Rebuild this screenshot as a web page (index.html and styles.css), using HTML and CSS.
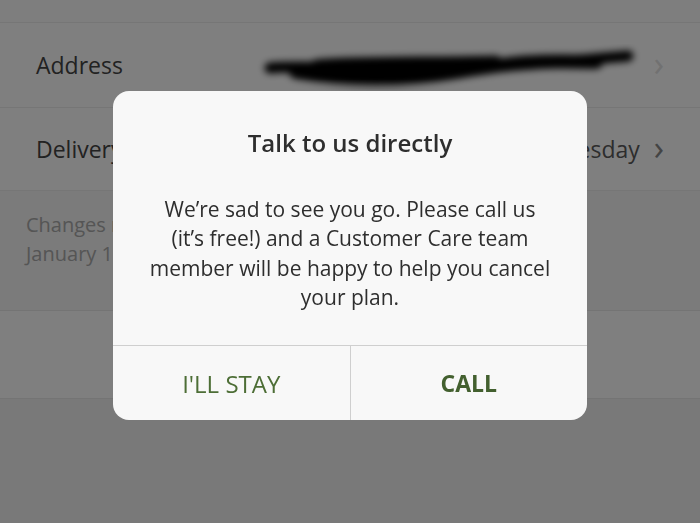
FILE: index.html
```html
<!DOCTYPE html>
<html lang="en">
<head>
    <meta charset="UTF-8">
    <meta name="viewport" content="width=device-width, initial-scale=1.0">
    <title>Subscription settings</title>
    <link rel="stylesheet" href="styles.css">
</head>
<body>
    <div class="page">
        <div class="top-band"></div>

        <div class="setting-row">
            <span class="setting-label">Address</span>
            <!-- address scribbled out -->
            <svg class="redacted" width="390" height="50" viewBox="0 0 390 50">
                <defs>
                    <filter id="smudge" x="-10%" y="-50%" width="120%" height="200%">
                        <feGaussianBlur stdDeviation="3.5"/>
                    </filter>
                </defs>
                <g filter="url(#smudge)" fill="none" stroke="#000" stroke-linecap="round">
                    <path d="M14 26 C 60 22, 120 30, 180 28 S 300 20, 372 14" stroke-width="11"/>
                    <path d="M40 30 C 90 38, 140 40, 200 30 S 280 18, 340 20" stroke-width="14"/>
                    <path d="M60 22 C 110 18, 170 20, 240 18" stroke-width="9"/>
                </g>
                <path d="M30 42 C 120 44, 200 46, 300 40" stroke="#fff" stroke-width="3" fill="none" opacity="0.35" filter="url(#smudge)"/>
            </svg>
            <span class="chevron faint">&#x203A;</span>
        </div>

        <div class="setting-row short">
            <span class="setting-label">Delivery day</span>
            <span class="setting-value">Wednesday</span>
            <span class="chevron">&#x203A;</span>
        </div>

        <p class="notice">Changes made now will take effect from Wednesday,<br>January 16.</p>

        <div class="blank-row"></div>
    </div>

    <!-- Modal shown over the settings page -->
    <div class="overlay">
        <div class="dialog">
            <h2 class="dialog-title">Talk to us directly</h2>
            <p class="dialog-body">We’re sad to see you go. Please call us<br>(it’s free!) and a Customer Care team<br>member will be happy to help you cancel<br>your plan.</p>
            <div class="dialog-actions">
                <button class="dialog-btn">I'LL STAY</button>
                <button class="dialog-btn primary">CALL</button>
            </div>
        </div>
    </div>
</body>
</html>
```

FILE: styles.css
```css
/* General body styling */
body {
    font-family: "Open Sans", sans-serif;
    margin: 0;
    padding: 0;
    background: #f2f2f2;
    color: #333;
    height: 523px;
    overflow: hidden;
}

/* Settings page behind the modal */
.page {
    background: #f6f6f6;
}

.top-band {
    height: 22px;
    background: #fcfcfc;
    border-bottom: 1px solid #ececec;
}

.setting-row {
    display: flex;
    align-items: center;
    height: 84px;
    padding: 0 36px;
    background: #ffffff;
    border-bottom: 1px solid #ececec;
    font-size: 23px;
}

.setting-row.short {
    height: 82px;
}

.setting-label {
    color: #444;
    flex: 1;
}

.setting-value {
    color: #5a5a5a;
}

.redacted {
    margin-right: -6px;
    margin-top: 4px;
}

.chevron {
    margin-left: 14px;
    font-size: 34px;
    color: #888;
    line-height: 1;
    padding-bottom: 4px;
}

.chevron.faint {
    color: #e2e2e2;
}

.notice {
    margin: 0;
    padding: 19px 26px 0;
    height: 100px;
    font-size: 20px;
    line-height: 29px;
    color: #aaa;
    background: #f6f6f6;
    border-bottom: 1px solid #e8e8e8;
}

.blank-row {
    height: 87px;
    background: #ffffff;
    border-bottom: 1px solid #e8e8e8;
}

/* Modal */
.overlay {
    position: fixed;
    inset: 0;
    background: rgba(0, 0, 0, 0.5);
    display: flex;
    justify-content: center;
    padding-top: 91px;
}

.dialog {
    width: 474px;
    height: 329px;
    background: #f8f8f8;
    border-radius: 16px;
    display: flex;
    flex-direction: column;
    overflow: hidden;
}

.dialog-title {
    margin: 0;
    padding-top: 37px;
    font-size: 24px;
    font-weight: 600;
    line-height: 30px;
    text-align: center;
    color: #2e2e2e;
}

.dialog-body {
    margin: 0;
    padding: 37px 20px 33px;
    font-size: 21px;
    line-height: 29.3px;
    text-align: center;
    color: #2e2e2e;
}

.dialog-actions {
    display: flex;
    flex: 1;
    border-top: 1px solid #cfcfcf;
}

.dialog-btn {
    flex: 1;
    border: none;
    background: none;
    font-family: inherit;
    font-size: 24px;
    color: #4d6e36;
    padding: 0;
    cursor: pointer;
}

.dialog-btn + .dialog-btn {
    border-left: 1px solid #cfcfcf;
}

.dialog-btn.primary {
    font-weight: 700;
    font-size: 23px;
    color: #43602f;
}
```
